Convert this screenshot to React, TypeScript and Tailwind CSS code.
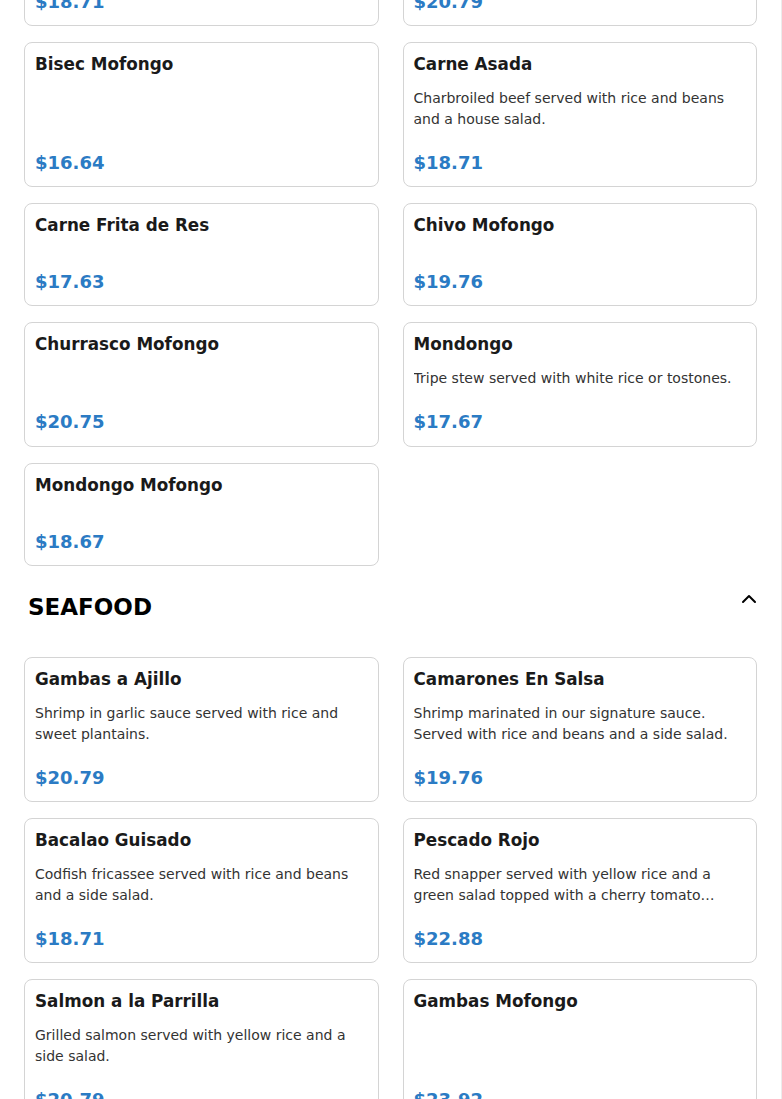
import React from 'react';
import { ChevronUp } from 'lucide-react';

interface MenuItem {
  name: string;
  description?: string;
  price: number;
}

// Items of the section above Seafood (page is scrolled, first row cut off)
const meatItems: MenuItem[] = [
  { name: 'Bistec Encebollado', price: 18.71 },
  { name: 'Chuleta Frita', price: 20.79 },
  { name: 'Bisec Mofongo', price: 16.64 },
  { name: 'Carne Asada', description: 'Charbroiled beef served with rice and beans and a house salad.', price: 18.71 },
  { name: 'Carne Frita de Res', price: 17.63 },
  { name: 'Chivo Mofongo', price: 19.76 },
  { name: 'Churrasco Mofongo', price: 20.75 },
  { name: 'Mondongo', description: 'Tripe stew served with white rice or tostones.', price: 17.67 },
  { name: 'Mondongo Mofongo', price: 18.67 },
];

const seafoodItems: MenuItem[] = [
  { name: 'Gambas a Ajillo', description: 'Shrimp in garlic sauce served with rice and sweet plantains.', price: 20.79 },
  { name: 'Camarones En Salsa', description: 'Shrimp marinated in our signature sauce. Served with rice and beans and a side salad.', price: 19.76 },
  { name: 'Bacalao Guisado', description: 'Codfish fricassee served with rice and beans and a side salad.', price: 18.71 },
  { name: 'Pescado Rojo', description: 'Red snapper served with yellow rice and a green salad topped with a cherry tomato vinaigrette.', price: 22.88 },
  { name: 'Salmon a la Parrilla', description: 'Grilled salmon served with yellow rice and a side salad.', price: 20.79 },
  { name: 'Gambas Mofongo', price: 23.92 },
];

function MenuCard({ item }: { item: MenuItem }) {
  return (
    <div className="flex flex-col border border-[#d4d4d4] rounded-lg bg-white pt-[11px] px-2.5 pb-[12.5px]">
      <h3 className="text-[16.8px] leading-[1.2] font-bold text-[#1a1a1a]">{item.name}</h3>
      <p className="mt-[14px] text-sm leading-[21px] text-[#333] line-clamp-2">{item.description}</p>
      <div className="mt-auto pt-[22px] text-lg leading-[1.2] font-bold text-[#2b7bc4]">${item.price.toFixed(2)}</div>
    </div>
  );
}

export default function App() {
  return (
    <div
      className="h-[1099px] overflow-hidden bg-white border-r border-[#ececec]"
      style={{ fontFamily: '"DejaVu Sans", sans-serif' }}
    >
      <div className="px-6">
        <div className="grid grid-cols-2 gap-x-6 gap-y-4 -mt-[77.5px]">
          {meatItems.map((item) => (
            <MenuCard key={item.name} item={item} />
          ))}
        </div>

        {/* Seafood */}
        <div className="mt-[25px] mb-[34px] flex items-start justify-between pl-1">
          <h2 className="text-[23px] leading-8 font-bold text-black">SEAFOOD</h2>
          <button className="-mt-[4px] -mr-[4px] text-black">
            <ChevronUp size={24} strokeWidth={2} />
          </button>
        </div>
        <div className="grid grid-cols-2 gap-x-6 gap-y-4">
          {seafoodItems.map((item) => (
            <MenuCard key={item.name} item={item} />
          ))}
        </div>
      </div>
    </div>
  );
}
